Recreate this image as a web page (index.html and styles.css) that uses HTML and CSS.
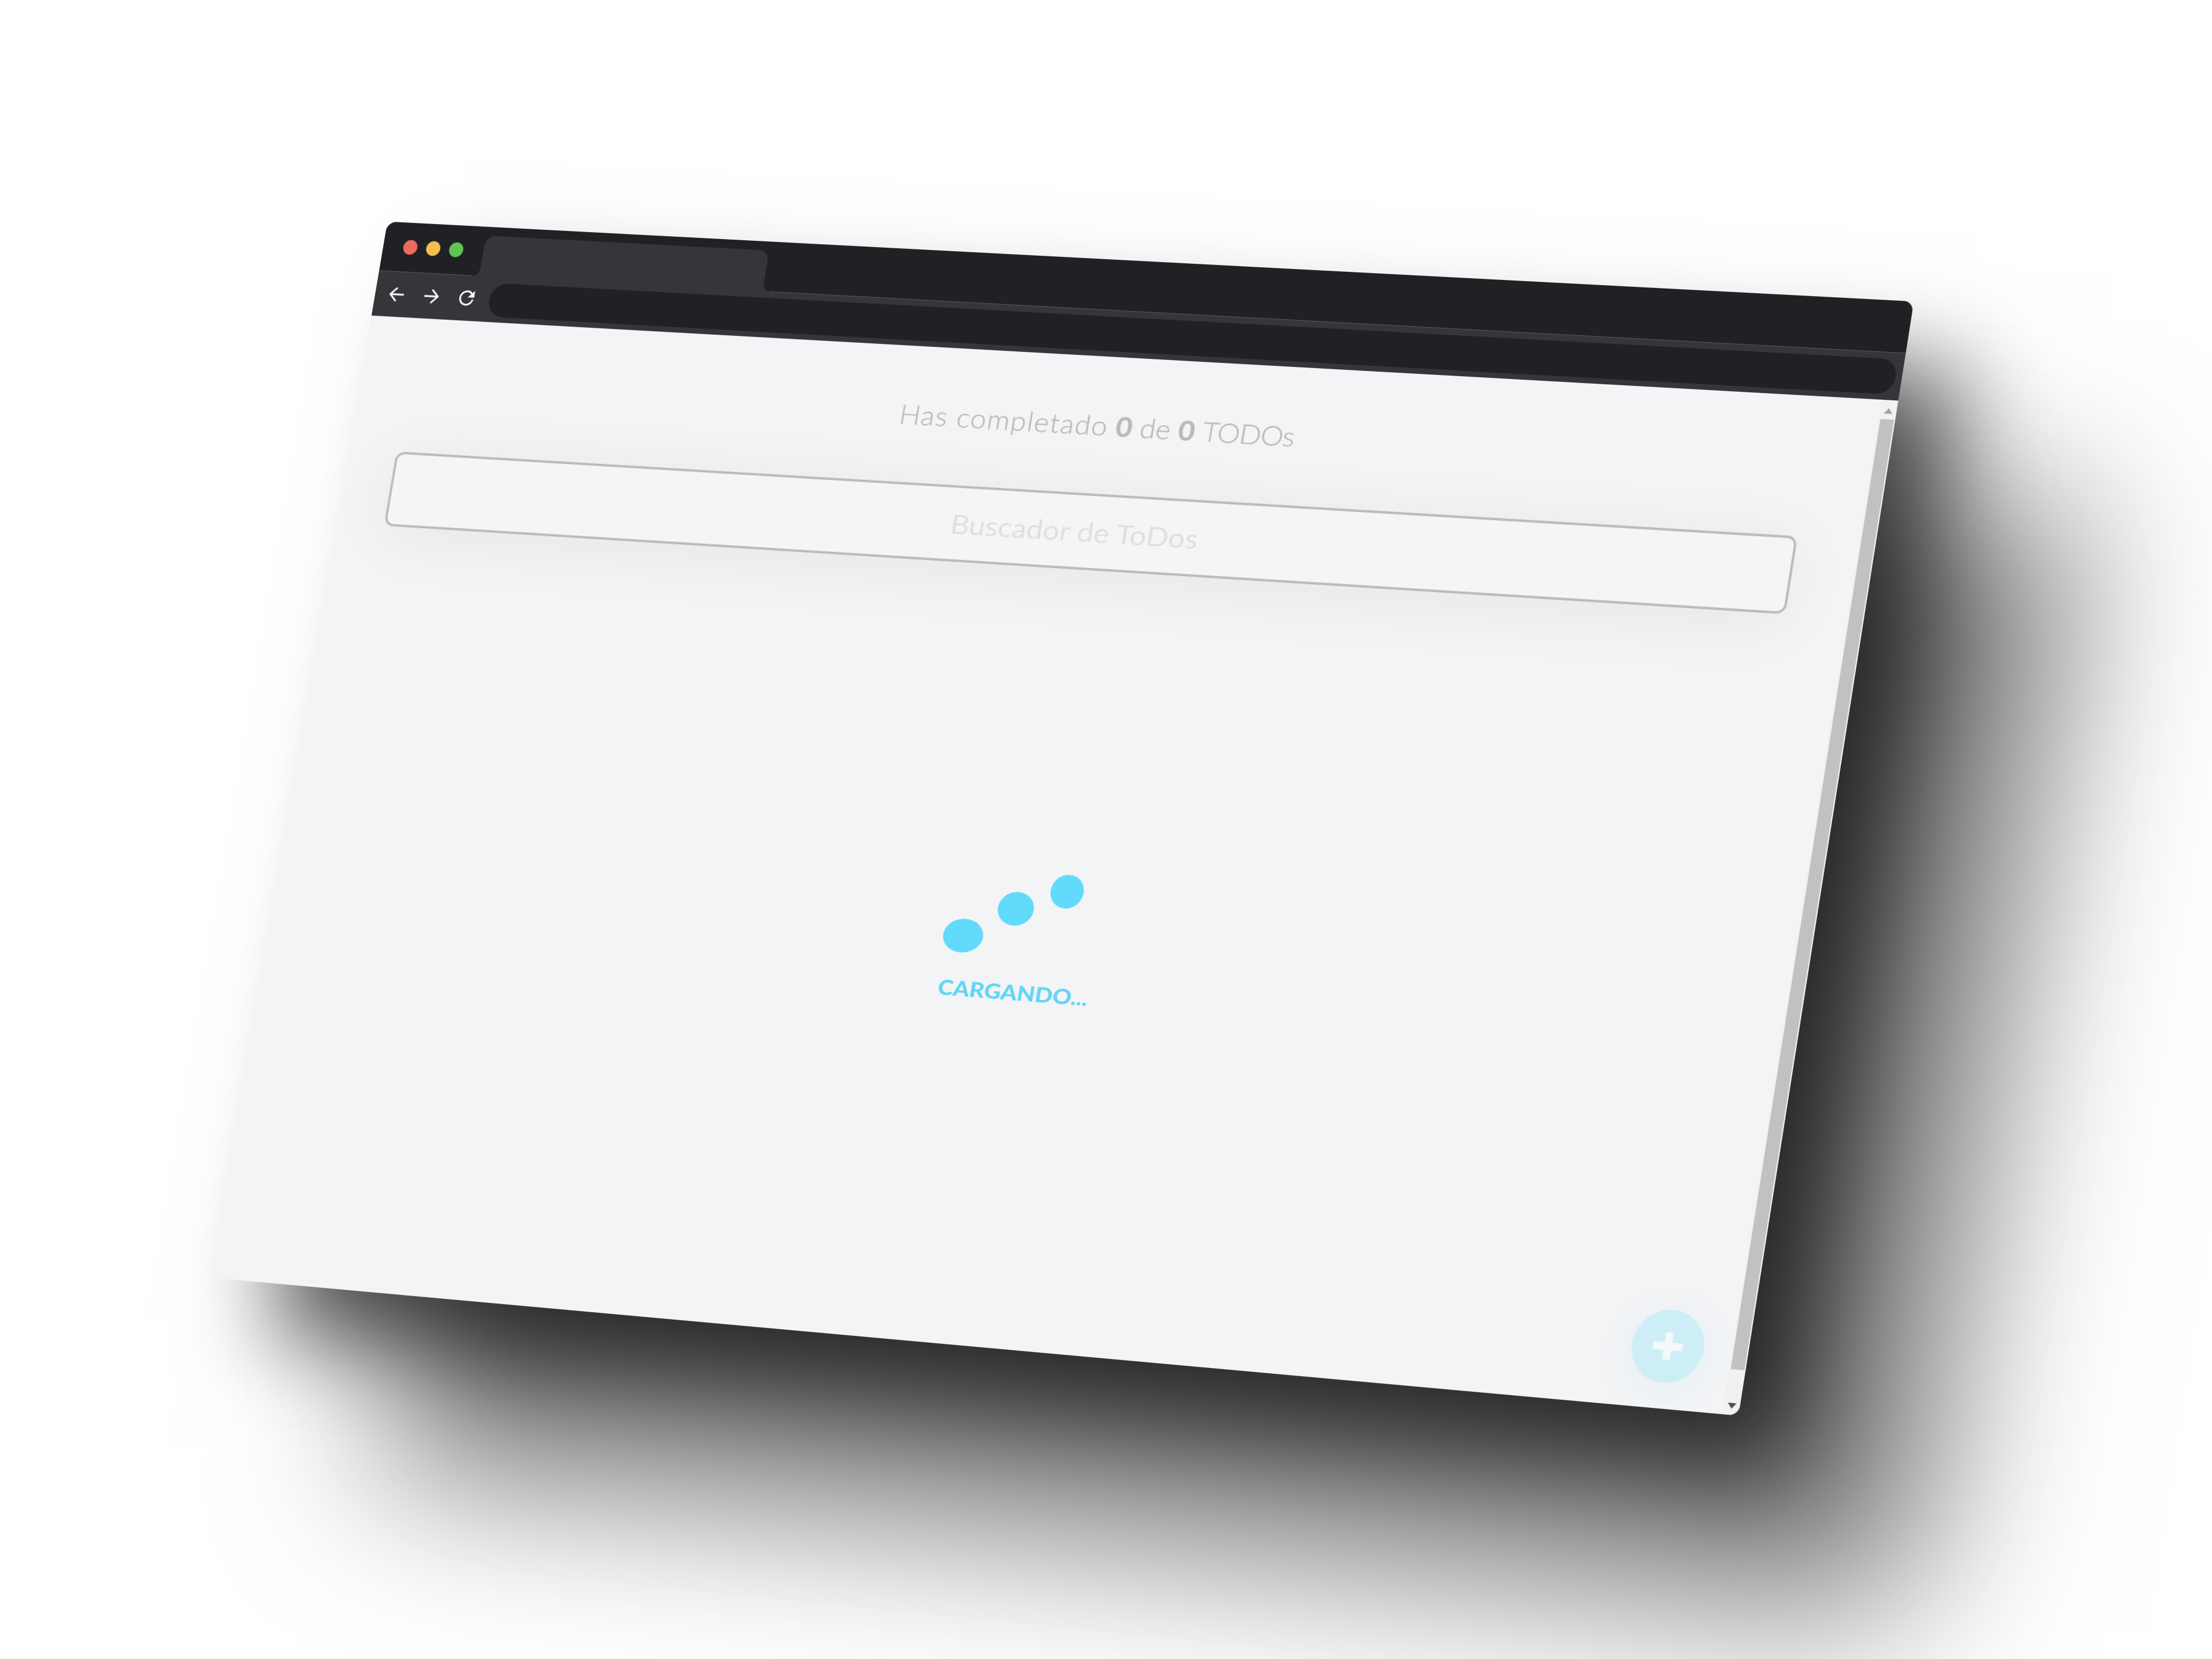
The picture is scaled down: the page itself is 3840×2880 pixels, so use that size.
FILE: index.html
```
<!DOCTYPE html>
<html lang="es">
<head>
<meta charset="utf-8">
<title>TODOs</title>
<link rel="stylesheet" href="styles.css">
</head>
<body>
<main class="browser">
  <header class="tabbar">
    <div class="lights"><i class="light red"></i><i class="light amber"></i><i class="light green"></i></div>
    <div class="tab"></div>
  </header>
  <nav class="toolbar">
    <svg class="icon" viewBox="0 0 28 28"><path d="M26 14H3M13.500 3.500L3 14l10.500 10.500"/></svg>
    <svg class="icon" viewBox="0 0 28 28"><path d="M2 14h23M14.500 3.500L25 14 14.500 24.500"/></svg>
    <svg class="icon" viewBox="0 0 28 28"><path d="M22.500 6A11.300 11.300 0 1 0 25 17"/><path class="solid" d="M27.500 1v11.500h-11.500z"/></svg>
    <div class="address"></div>
  </nav>
  <section class="viewport">
    <div class="page">
      <h1 class="counter"><span class="fit"><span class="wide">Has completado</span> <b>0</b> de <b>0</b> <span class="tight">TODOs</span></span></h1>
      <div class="search"><span class="fit">Buscador de ToDos</span></div>
      <div class="loader">
        <div class="dots"><i class="dot first"></i><i class="dot second"></i><i class="dot third"></i></div>
        <p class="loading"><span class="fit">CARGANDO...</span></p>
      </div>
      <button class="add" aria-label="Crear"><svg viewBox="0 0 48 44"><path d="M24 0v44M0 22h48"/></svg></button>
    </div>
    <div class="scrollbar"><i class="up"></i><i class="thumb"></i><i class="down"></i></div>
  </section>
</main>
</body>
</html>
```
FILE: styles.css
```
* { box-sizing: border-box; }
html, body { margin: 0; width: 3840px; height: 2880px; overflow: hidden; background: #fff; }
body { font-family: Lato, "Open Sans", sans-serif; }
.browser {
  width: 2600px; height: 1784px;
  display: flex; flex-direction: column;
  border-radius: 16px;
  background: #f3f4f6;
  transform-origin: 0 0;
  transform: matrix3d(.953642, .043023, 0, -.0000197288, -.175891, 1.017265, 0, -.0000046256, 0, 0, 1, 0, 672.6, 384.6, 0, 1);
  box-shadow: 108px 95px 150px -16px rgba(0,0,0,.68), 335px 300px 460px -20px rgba(0,0,0,.55);
}
.tabbar {
  flex: none; height: 84px; display: flex; align-items: flex-end;
  background: #202124; border-radius: 16px 16px 0 0;
  border-bottom: 1px solid #55565a;
}
.lights { width: 179px; height: 84px; padding-left: 36px; display: flex; align-items: center; gap: 16px; }
.light { width: 25px; height: 25px; border-radius: 50%; }
.red { background: #ee6a5f; }
.amber { background: #f5bd4f; }
.green { background: #61c454; }
.tab { position: relative; width: 500px; height: 69px; margin-bottom: -1px; background: #35363a; border-radius: 18px 18px 0 0; }
.tab::before, .tab::after { content: ""; position: absolute; bottom: 0; width: 12px; height: 16px; }
.tab::before { right: 100%; background: radial-gradient(ellipse 12px 16px at 0 0, #202124 98%, #35363a 100%); }
.tab::after { left: 100%; background: radial-gradient(ellipse 12px 16px at 100% 0, #202124 98%, #35363a 100%); }
.toolbar { flex: none; height: 76.4px; display: flex; align-items: center; padding: 0 10px 0 24px; background: #35363a; }
.icon { flex: none; width: 28px; height: 28px; margin-right: 34.500px; fill: none; stroke: #fff; stroke-width: 3; stroke-linecap: round; stroke-linejoin: round; }
.icon .solid { fill: #fff; stroke: none; }
.icon:nth-child(3) { margin-right: 27px; }
.address { flex: 1; height: 57px; border-radius: 29px; background: #202124; }
.viewport { flex: 1; display: flex; min-height: 0; }
.page { position: relative; flex: 1; border-radius: 0 0 0 16px; background: #f3f4f6; }
.fit { display: inline-block; white-space: nowrap; }
.counter { margin: 0; padding-top: 85.600px; height: 226px; line-height: 54px; font-size: 44px; font-weight: 300; color: #b9babc; text-align: center; }
.counter .fit { transform: scaleX(1.097); -webkit-text-stroke: .5px #b9babc; }
.counter .wide { letter-spacing: 1.400px; }
.counter .tight { letter-spacing: -.8px; }
.counter b { font-weight: 700; }
.search {
  width: 2388px; height: 125.500px; margin-left: 85px;
  display: flex; align-items: center; justify-content: center;
  border: 4px solid #bbbcbe; border-radius: 16px; background: #f4f5f7;
  box-shadow: 0 15px 110px rgba(0,0,0,.06);
  font-size: 44px; font-weight: 400; color: #dedfe1;
}
.search .fit { transform: scaleX(1.139); }
.loader { width: 252px; margin: 498px 0 0 1170px; }
.dots { height: 140px; display: flex; align-items: flex-start; }
.dot { flex: none; height: 55px; border-radius: 50%; background: #61dafb; }
.first { width: 68px; margin-top: 84px; }
.second { width: 61px; margin: 34px 23px 0 17px; }
.third { width: 56px; }
.loading { margin: 37px 0 0 6px; font-size: 34px; line-height: 40px; font-weight: 900; color: #61d5f5; }
.loading .fit { transform-origin: 0 50%; transform: scaleX(1.16); }
.add {
  position: absolute; right: 45px; bottom: 41px; width: 116px; height: 116px; padding: 0;
  display: grid; place-items: center; border: 0; border-radius: 50%; background: #cdeef7;
  box-shadow: 0 10px 60px rgba(97,200,220,.1);
}
.add svg { width: 48px; height: 44px; fill: none; stroke: #f4f8fa; stroke-width: 12.500; }
.scrollbar { flex: none; width: 27px; padding: 13px 2.500px 10px; display: flex; flex-direction: column; align-items: center; background: #f1f1f1; border-radius: 0 0 16px 0; }
.up { border: 7px solid transparent; border-top: 0; border-bottom: 9px solid #a3a3a3; }
.thumb { width: 22px; height: 1521px; margin-top: 9px; background: #c1c1c1; }
.down { margin-top: auto; border: 7px solid transparent; border-bottom: 0; border-top: 9px solid #505050; }
```
